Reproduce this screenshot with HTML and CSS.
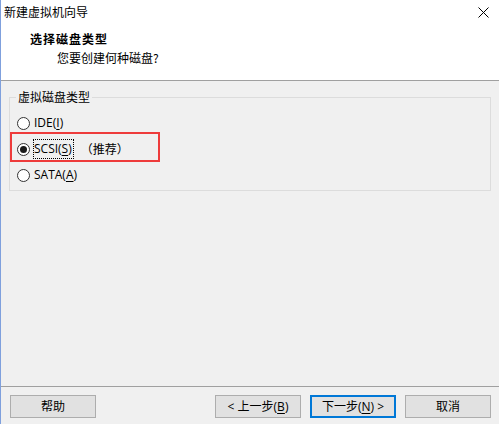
FILE: index.html
```html
<!DOCTYPE html>
<html lang="zh-CN">
<head>
    <meta charset="UTF-8">
    <meta name="viewport" content="width=device-width, initial-scale=1.0">
    <title>新建虚拟机向导</title>
    <link rel="stylesheet" href="styles.css">
</head>
<body>
    <div class="wizard">
        <div class="top">
            <div class="titlebar">
                <span class="title">新建虚拟机向导</span>
                <svg class="close" width="11" height="11" viewBox="0 0 11 11">
                    <path d="M0.5 0.5 L10.5 10.5 M10.5 0.5 L0.5 10.5" stroke="#000" stroke-width="1" fill="none"/>
                </svg>
            </div>
            <div class="heading">选择磁盘类型</div>
            <div class="sub">您要创建何种磁盘?</div>
        </div>

        <div class="content">
            <fieldset class="group">
                <legend>虚拟磁盘类型</legend>
                <div class="row">
                    <span class="radio"></span>
                    <span>IDE(<u>I</u>)</span>
                </div>
                <div class="row marked">
                    <span class="radio checked"></span>
                    <span class="focus">SCSI(<u>S</u>)</span>
                    <span class="hint">（推荐）</span>
                </div>
                <div class="row">
                    <span class="radio"></span>
                    <span>SATA(<u>A</u>)</span>
                </div>
            </fieldset>
        </div>

        <div class="footer">
            <button class="btn">帮助</button>
            <div class="nav">
                <button class="btn">&lt; 上一步(<u>B</u>)</button>
                <button class="btn default">下一步(<u>N</u>) &gt;</button>
                <button class="btn">取消</button>
            </div>
        </div>
    </div>
</body>
</html>
```

FILE: styles.css
```css
body {
    margin: 0;
    font-family: "Open Sans", "Noto Sans CJK SC", sans-serif;
    font-size: 12px;
    color: #000;
    background: #f0f0f0;
}

.wizard {
    width: 499px;
    height: 424px;
    box-sizing: border-box;
    border-left: 1px solid #7fa0dd;
    display: flex;
    flex-direction: column;
    background: #f0f0f0;
}

/* white header */
.top {
    flex: none;
    height: 81px;
    box-sizing: border-box;
    padding-top: 4px;
    background: #fff;
    border-bottom: 1px solid #a0a0a0;
}

.titlebar {
    display: flex;
    justify-content: space-between;
    align-items: center;
    padding-left: 3px;
    padding-right: 10px;
    line-height: 16px;
    font-family: "Noto Sans CJK SC", sans-serif;
}

.close {
    display: block;
}

.heading {
    margin-top: 11px;
    padding-left: 29px;
    line-height: 16px;
    font-weight: bold;
    font-family: "Noto Sans CJK SC", sans-serif;
    letter-spacing: 1px;
}

.sub {
    margin-top: 3px;
    padding-left: 56px;
    line-height: 16px;
    font-family: "Noto Sans CJK SC", sans-serif;
}

/* body */
.content {
    flex: none;
    height: 305px;
    padding: 8px 8px 0 8px;
    box-sizing: border-box;
}

.group {
    margin: 0;
    padding: 5px 0 2px 6px;
    border: 1px solid #dcdcdc;
    min-width: 0;
}

.group legend {
    padding: 0 2px;
    line-height: 16px;
    font-family: "Noto Sans CJK SC", sans-serif;
}

.row {
    position: relative;
    display: flex;
    align-items: center;
    height: 26px;
    line-height: 18px;
}

.row u {
    text-decoration: underline;
    text-underline-offset: 2px;
}

.radio {
    width: 13px;
    height: 13px;
    box-sizing: border-box;
    border: 1px solid #333;
    border-radius: 50%;
    background: #fff;
    margin: 0 4px 0 1px;
    position: relative;
}

.radio.checked::after {
    content: "";
    position: absolute;
    left: 2px;
    top: 2px;
    width: 7px;
    height: 7px;
    border-radius: 50%;
    background: #1a1a1a;
}

.focus {
    outline: 1px dotted #000;
    outline-offset: 0;
    padding: 0 1px 0 0;
}

.hint {
    margin-left: 8px;
    font-family: "Noto Sans CJK SC", sans-serif;
}

/* red annotation box */
.row.marked::after {
    content: "";
    position: absolute;
    left: -6px;
    top: -4px;
    width: 150px;
    height: 30px;
    box-sizing: border-box;
    border: 2px solid #ee3b3b;
}

/* buttons */
.footer {
    flex: 1;
    border-top: 1px solid #a0a0a0;
    display: flex;
    justify-content: space-between;
    align-items: flex-start;
    padding: 8px 8px 0 9px;
}

.nav {
    display: flex;
    gap: 9px;
}

.btn {
    width: 86px;
    height: 23px;
    box-sizing: border-box;
    margin: 0;
    padding: 0;
    font-family: "Open Sans", "Noto Sans CJK SC", sans-serif;
    font-size: 12px;
    color: #000;
    background: #e1e1e1;
    border: 1px solid #adadad;
    border-radius: 0;
    line-height: 20px;
}

.btn u {
    text-underline-offset: 2px;
}

.btn.default {
    border-color: #0078d7;
    box-shadow: inset 0 0 0 1px #0078d7;
}
```
